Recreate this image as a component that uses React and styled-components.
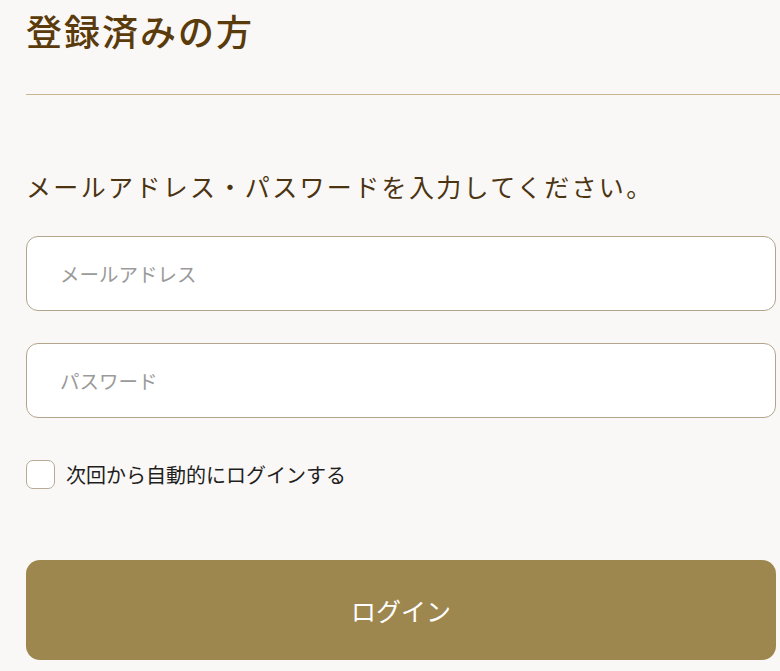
import React from "react";
import styled, { createGlobalStyle } from "styled-components";

const Global = createGlobalStyle`
  html, body { margin: 0; padding: 0; background: #faf8f6; }
  body { font-family: "Noto Sans CJK JP", "Noto Sans", sans-serif; overflow: hidden; }
  * { box-sizing: border-box; }
`;

const Page = styled.div`
  padding: 3px 0 0 26px;
  width: 780px;
`;

const Panel = styled.section`
  width: 750px;
  display: flex;
  flex-direction: column;
`;

const Title = styled.h2`
  margin: 0;
  font-size: 36px;
  line-height: 54px;
  font-weight: 500;
  color: #5a3b0c;
  letter-spacing: 0.055em;
  padding-bottom: 37px;
  border-bottom: 1px solid #c8b592;
  margin-right: -30px;
`;

const Lead = styled.p`
  margin: 71px 0 30px;
  font-size: 25px;
  line-height: 40px;
  color: #4b3412;
  letter-spacing: 0.094em;
`;

const Field = styled.input`
  height: 75px;
  width: 750px;
  border: 1px solid #b3a48c;
  border-radius: 12px;
  background: #fff;
  padding: 0 33px;
  font-family: inherit;
  font-size: 19.5px;
  color: #333;
  margin-bottom: ${(p) => p.$gap || 0}px;
  &::placeholder { color: #9a9a9a; }
  outline: none;
`;

const CheckRow = styled.label`
  display: flex;
  align-items: center;
  gap: 11px;
  margin-top: 42px;
  font-size: 20px;
  color: #1e1e1e;
`;

const Box = styled.span`
  width: 29px;
  height: 29px;
  border: 1.5px solid #b8aa94;
  border-radius: 7px;
  background: #fff;
  flex: none;
`;

const Button = styled.button`
  margin-top: 71px;
  height: 100px;
  width: 750px;
  border: none;
  border-radius: 14px;
  background: #9e874f;
  color: #fff;
  font-family: inherit;
  font-size: 25px;
`;

export default function App() {
  return (
    <Page>
      <Global />
      <Panel>
        <Title>登録済みの方</Title>
        <Lead>メールアドレス・パスワードを入力してください。</Lead>
        <Field placeholder="メールアドレス" $gap={32} />
        <Field placeholder="パスワード" type="password" />
        <CheckRow>
          <Box />
          次回から自動的にログインする
        </CheckRow>
        <Button>ログイン</Button>
      </Panel>
    </Page>
  );
}
